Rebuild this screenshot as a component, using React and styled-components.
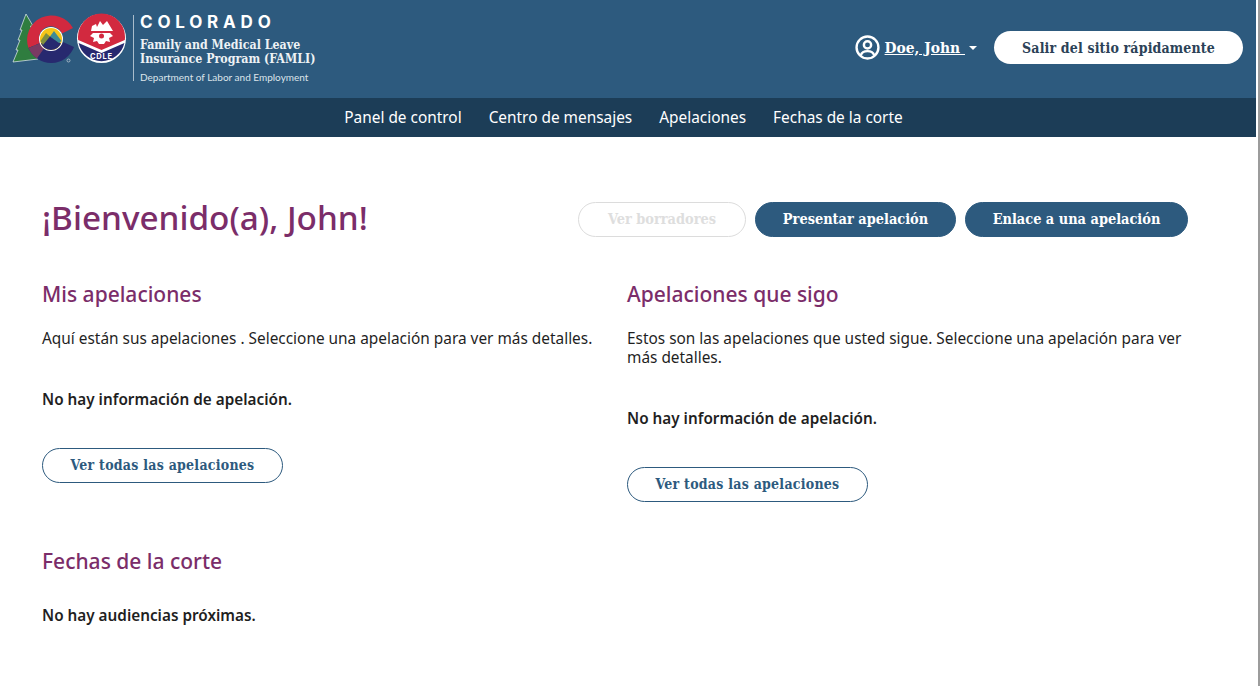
import React from "react";
import styled, { createGlobalStyle } from "styled-components";

const Logo = () => (
  <LogoSvg viewBox="12 13 116 52">
    <path d="M26 14 L33 26 L30.500 26 L35 36 L33 36 L38 59 L13 62 L18 50 L16 50 L20 40 L18 40 L22 30 L20 30 Z" fill="#2f7d3f" stroke="#e8eef2" strokeWidth="0.7" />
    <path d="M73 28 A24.500 24.500 0 0 0 28.500 48.100 L40 43.200 A12 12 0 0 1 62 33.500 Z" fill="#d2293f" />
    <path d="M28.500 48.100 A24.500 24.500 0 0 0 74 47 L63 42 A12.500 12.500 0 0 1 40 43.200 Z" fill="#27296f" />
    <path d="M28.500 48.100 A24.500 24.500 0 0 0 36.900 58.600 L44.100 48.300 A12 12 0 0 1 40 43.200 Z" fill="#7a3a63" />
    <circle cx="51" cy="39" r="12" fill="#fff" />
    <circle cx="51" cy="39" r="11" fill="#f5c518" />
    <path d="M61 43.500 L50 36 L41 43.500 A11 11 0 0 0 61 43.500 Z" fill="#27296f" />
    <path d="M40.500 41 L46 33 L50 36.500 L43 45 Z" fill="#7f8f3f" />
    <path d="M54 31 L61.500 41 L59 43 L50 36.500 Z" fill="#3d8a94" />
    <circle cx="68.500" cy="60.500" r="1.500" fill="none" stroke="#dfe6ea" strokeWidth="0.6" />
    <circle cx="101.500" cy="38.500" r="24.500" fill="#fff" />
    <path d="M78.200 40 A23.500 23.500 0 1 1 124.800 40 L101.500 50 Z" fill="#d2293f" />
    <path d="M78.600 43 L101.500 53 L124.400 43 A23.500 23.500 0 0 1 78.600 43 Z" fill="#27296f" />
    <path d="M91 31 L92 26 L96 24 L97 27 L100 21 L103 25 L107 21 L110 26 L113 31 Z" fill="#fff" />
    <path d="M93 33 H110 L113 36 L109 38 L110 42 L106 41 L104 44 L99 44 L97 41 L93 42 L94 38 L90 36 Z" fill="#fff" />
    <circle cx="101.500" cy="36" r="2.500" fill="#d2293f" />
    <LogoCaption x="101.500" y="59" textAnchor="middle">CDLE</LogoCaption>
  </LogoSvg>
);

const UserIcon = () => (
  <svg width="25" height="25" viewBox="0 0 24 24" fill="none" stroke="#fff" strokeWidth="2.300" aria-hidden="true">
    <circle cx="12" cy="12" r="10.500" />
    <circle cx="12" cy="9.500" r="3.500" />
    <path d="M5.500 19.500 C6.500 16.500 9 15.500 12 15.500 C15 15.500 17.500 16.500 18.500 19.500" />
  </svg>
);

export default function App() {
  return (
    <Page>
      <GlobalStyle />
      <Header>
        <Brand>
          <Logo />
          <Divider />
          <BrandText>
            <State>COLORADO</State>
            <Program>
              Family and Medical Leave
              <br />
              Insurance Program (FAMLI)
            </Program>
            <Department>Department of Labor and Employment</Department>
          </BrandText>
        </Brand>
        <HeaderActions>
          <UserMenu>
            <UserIcon />
            <UserName href="#">Doe, John&nbsp;</UserName>
            <Caret />
          </UserMenu>
          <ExitButton>Salir del sitio rápidamente</ExitButton>
        </HeaderActions>
      </Header>
      <Nav>
        <NavLink href="#">Panel de control</NavLink>
        <NavLink href="#">Centro de mensajes</NavLink>
        <NavLink href="#">Apelaciones</NavLink>
        <NavLink href="#">Fechas de la corte</NavLink>
      </Nav>
      <Main>
        <TitleRow>
          <Title>¡Bienvenido(a), John!</Title>
          <TitleActions>
            <PillButton $disabled $width={168}>Ver borradores</PillButton>
            <PillButton $width={201}>Presentar apelación</PillButton>
            <PillButton $width={223}>Enlace a una apelación</PillButton>
          </TitleActions>
        </TitleRow>
        <Columns>
          <Column>
            <SectionTitle>Mis apelaciones</SectionTitle>
            <Description>Aquí están sus apelaciones . Seleccione una apelación para ver más detalles.</Description>
            <Empty>No hay información de apelación.</Empty>
            <OutlineButton>Ver todas las apelaciones</OutlineButton>
          </Column>
          <Column>
            <SectionTitle>Apelaciones que sigo</SectionTitle>
            <Description>Estos son las apelaciones que usted sigue. Seleccione una apelación para ver más detalles.</Description>
            <Empty>No hay información de apelación.</Empty>
            <OutlineButton>Ver todas las apelaciones</OutlineButton>
          </Column>
        </Columns>
        <Hearings>
          <SectionTitle>Fechas de la corte</SectionTitle>
          <HearingsEmpty>No hay audiencias próximas.</HearingsEmpty>
        </Hearings>
      </Main>
    </Page>
  );
}

const sans = `"Noto Sans", "Open Sans", sans-serif`;
const slab = `"DejaVu Serif Condensed", "DejaVu Serif", serif`;

const GlobalStyle = createGlobalStyle`
  html, body {
    margin: 0;
    background: #fff;
    overflow: hidden;
  }
`;

const Page = styled.div`
  box-sizing: border-box;
  width: 1260px;
  height: 686px;
  padding-right: 2px;
  border-right: 2px solid #9c9c9c;
  font-family: ${sans};
  color: #1f1f1f;
`;

const Header = styled.header`
  height: 98px;
  background: #2d5a7e;
  display: flex;
  align-items: flex-start;
  justify-content: space-between;
  padding: 0 13px 0 12px;
`;

const Brand = styled.div`
  display: flex;
  align-items: flex-start;
  padding-top: 13px;
`;

const LogoSvg = styled.svg`
  width: 116px;
  height: 52px;
  flex: none;
`;

const LogoCaption = styled.text`
  font-family: "Inter", sans-serif;
  font-size: 7.500px;
  font-weight: 700;
  letter-spacing: 0.8px;
  fill: #fff;
`;

const Divider = styled.div`
  width: 1px;
  height: 66px;
  margin: 2px 6px 0 5px;
  background: #a9bccb;
`;

const BrandText = styled.div`
  color: #fff;
`;

const State = styled.div`
  font-family: "Inter", sans-serif;
  font-size: 17px;
  line-height: 18px;
  font-weight: 700;
  letter-spacing: 4.800px;
`;

const Program = styled.div`
  margin-top: 7px;
  font-family: ${slab};
  font-size: 12.300px;
  line-height: 14px;
  font-weight: 700;
  color: #edf2f5;
`;

const Department = styled.div`
  margin-top: 5px;
  font-family: "Lato", sans-serif;
  font-size: 10px;
  line-height: 12px;
  color: #dbe4ea;
`;

const HeaderActions = styled.div`
  display: flex;
  align-items: center;
  padding-top: 31px;
  gap: 17px;
`;

const UserMenu = styled.div`
  display: flex;
  align-items: center;
  color: #fff;
`;

const UserName = styled.a`
  margin-left: 5px;
  font-family: ${slab};
  font-size: 15.400px;
  font-weight: 700;
  color: #fff;
  text-decoration: underline;
`;

const Caret = styled.span`
  margin-left: 4px;
  width: 0;
  height: 0;
  border-left: 4px solid transparent;
  border-right: 4px solid transparent;
  border-top: 4px solid #fff;
`;

const ExitButton = styled.button`
  width: 249px;
  height: 33px;
  padding: 0;
  border: 0;
  border-radius: 17px;
  background: #fff;
  font-family: ${slab};
  font-size: 14px;
  font-weight: 700;
  letter-spacing: 0.15px;
  color: #2b4257;
`;

const Nav = styled.nav`
  box-sizing: border-box;
  height: 39px;
  background: #1c3d57;
  display: flex;
  align-items: center;
  justify-content: center;
  gap: 27px;
  padding: 0 9px 0 0;
`;

const NavLink = styled.a`
  font-family: ${sans};
  font-size: 15.400px;
  color: #fff;
  text-decoration: none;
`;

const Main = styled.main`
  padding: 65px 0 0 42px;
`;

const TitleRow = styled.div`
  display: flex;
  align-items: flex-start;
  justify-content: space-between;
  padding-right: 68px;
`;

const Title = styled.h1`
  margin: 0;
  font-family: ${sans};
  font-size: 33.300px;
  line-height: 31px;
  font-weight: 500;
  color: #7b2d69;
`;

const TitleActions = styled.div`
  display: flex;
  gap: 9px;
`;

const PillButton = styled.button`
  width: ${(p) => p.$width}px;
  height: 35px;
  padding: 0 0 2px;
  border-radius: 18px;
  border: 1px solid ${(p) => (p.$disabled ? "#dcdcdc" : "#2d5a7e")};
  background: ${(p) => (p.$disabled ? "#fff" : "#2d5a7e")};
  color: ${(p) => (p.$disabled ? "#dedede" : "#fff")};
  font-family: ${slab};
  font-size: 14.400px;
  font-weight: 700;
`;

const Columns = styled.div`
  display: grid;
  grid-template-columns: 585px 570px;
  margin-top: 43px;
`;

const Column = styled.section``;

const SectionTitle = styled.h2`
  margin: 0;
  font-family: ${sans};
  font-size: 21px;
  line-height: 28px;
  font-weight: 500;
  color: #7b2d69;
`;

const Description = styled.p`
  margin: 21px 0 0;
  max-width: 556px;
  font-size: 15.400px;
  line-height: 19px;
  color: #1f1f1f;
`;

const Empty = styled.p`
  margin: 42px 0 0;
  font-size: 15.300px;
  line-height: 19px;
  font-weight: 600;
  color: #1f1f1f;
`;

const OutlineButton = styled.button`
  display: block;
  width: 241px;
  height: 35px;
  margin-top: 39px;
  padding: 0 0 2px;
  border: 1px solid #2d5a7e;
  border-radius: 18px;
  background: #fff;
  color: #2d5a7e;
  font-family: ${slab};
  font-size: 14px;
  font-weight: 700;
  letter-spacing: 0.25px;
`;

const Hearings = styled.section`
  margin-top: 45px;
`;

const HearingsEmpty = styled(Empty)`
  margin-top: 31px;
`;
